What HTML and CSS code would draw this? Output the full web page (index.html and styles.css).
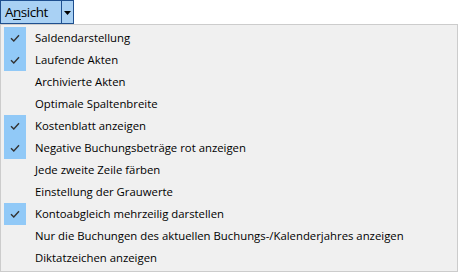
FILE: index.html
```html
<!DOCTYPE html>
<html lang="de">
<head>
<meta charset="utf-8">
<link rel="stylesheet" href="styles.css">
</head>
<body>
<div class="bar">
  <div class="btn"><span class="label">A<u>n</u>sicht</span><span class="drop"><svg width="7" height="4" viewBox="0 0 7 4"><path d="M0 0H7L3.5 4Z" fill="#000"/></svg></span></div>
</div>
<div class="menu">
  <div class="item on"><span class="chk"><svg width="10" height="8" viewBox="0 0 10 8"><path d="M1 4.2L3.8 7L9 1.2" fill="none" stroke="#333" stroke-width="1.4"/></svg></span><span class="txt">Saldendarstellung</span></div>
  <div class="item on"><span class="chk"><svg width="10" height="8" viewBox="0 0 10 8"><path d="M1 4.2L3.8 7L9 1.2" fill="none" stroke="#333" stroke-width="1.4"/></svg></span><span class="txt">Laufende Akten</span></div>
  <div class="item"><span class="chk"></span><span class="txt">Archivierte Akten</span></div>
  <div class="item"><span class="chk"></span><span class="txt">Optimale Spaltenbreite</span></div>
  <div class="item on"><span class="chk"><svg width="10" height="8" viewBox="0 0 10 8"><path d="M1 4.2L3.8 7L9 1.2" fill="none" stroke="#333" stroke-width="1.4"/></svg></span><span class="txt">Kostenblatt anzeigen</span></div>
  <div class="item on"><span class="chk"><svg width="10" height="8" viewBox="0 0 10 8"><path d="M1 4.2L3.8 7L9 1.2" fill="none" stroke="#333" stroke-width="1.4"/></svg></span><span class="txt">Negative Buchungsbeträge rot anzeigen</span></div>
  <div class="item"><span class="chk"></span><span class="txt">Jede zweite Zeile färben</span></div>
  <div class="item"><span class="chk"></span><span class="txt">Einstellung der Grauwerte</span></div>
  <div class="item on"><span class="chk"><svg width="10" height="8" viewBox="0 0 10 8"><path d="M1 4.2L3.8 7L9 1.2" fill="none" stroke="#333" stroke-width="1.4"/></svg></span><span class="txt">Kontoabgleich mehrzeilig darstellen</span></div>
  <div class="item"><span class="chk"></span><span class="txt">Nur die Buchungen des aktuellen Buchungs-/Kalenderjahres anzeigen</span></div>
  <div class="item"><span class="chk"></span><span class="txt">Diktatzeichen anzeigen</span></div>
</div>
</body>
</html>
```
FILE: styles.css
```css
html, body {
  margin: 0;
  padding: 0;
  background: #ffffff;
  width: 458px;
  height: 272px;
  overflow: hidden;
  font-family: "Open Sans", "Noto Sans", "Liberation Sans", sans-serif;
  font-size: 11.35px;
  color: #000;
}
.bar {
  height: 24px;
  display: flex;
}
.btn {
  display: flex;
  height: 24px;
  box-sizing: border-box;
  border: 1px solid #1e4f8f;
  background: #a9d1f4;
}
.label {
  width: 61px;
  box-sizing: border-box;
  padding-left: 4px;
  font-family: "Open Sans", sans-serif;
  font-size: 13.5px;
  letter-spacing: -0.5px;
  line-height: 22px;
  border-right: 1px solid #1e4f8f;
}
.label u {
  text-decoration-thickness: 1px;
  text-underline-offset: 2px;
}
.drop {
  width: 11px;
  display: flex;
  align-items: center;
  justify-content: center;
  padding-top: 1px;
}
.menu {
  box-sizing: border-box;
  width: 458px;
  height: 248px;
  border: 1px solid #cccccc;
  background: #f0f0f0;
  padding: 2px 2px 0 2px;
}
.item {
  display: flex;
  align-items: center;
  height: 22px;
}
.chk {
  width: 22px;
  height: 22px;
  margin-left: 1px;
  display: flex;
  align-items: center;
  justify-content: center;
}
.item.on .chk {
  background: #91c9f7;
}
.txt {
  margin-left: 9px;
  line-height: 22px;
  color: #000;
}
```
